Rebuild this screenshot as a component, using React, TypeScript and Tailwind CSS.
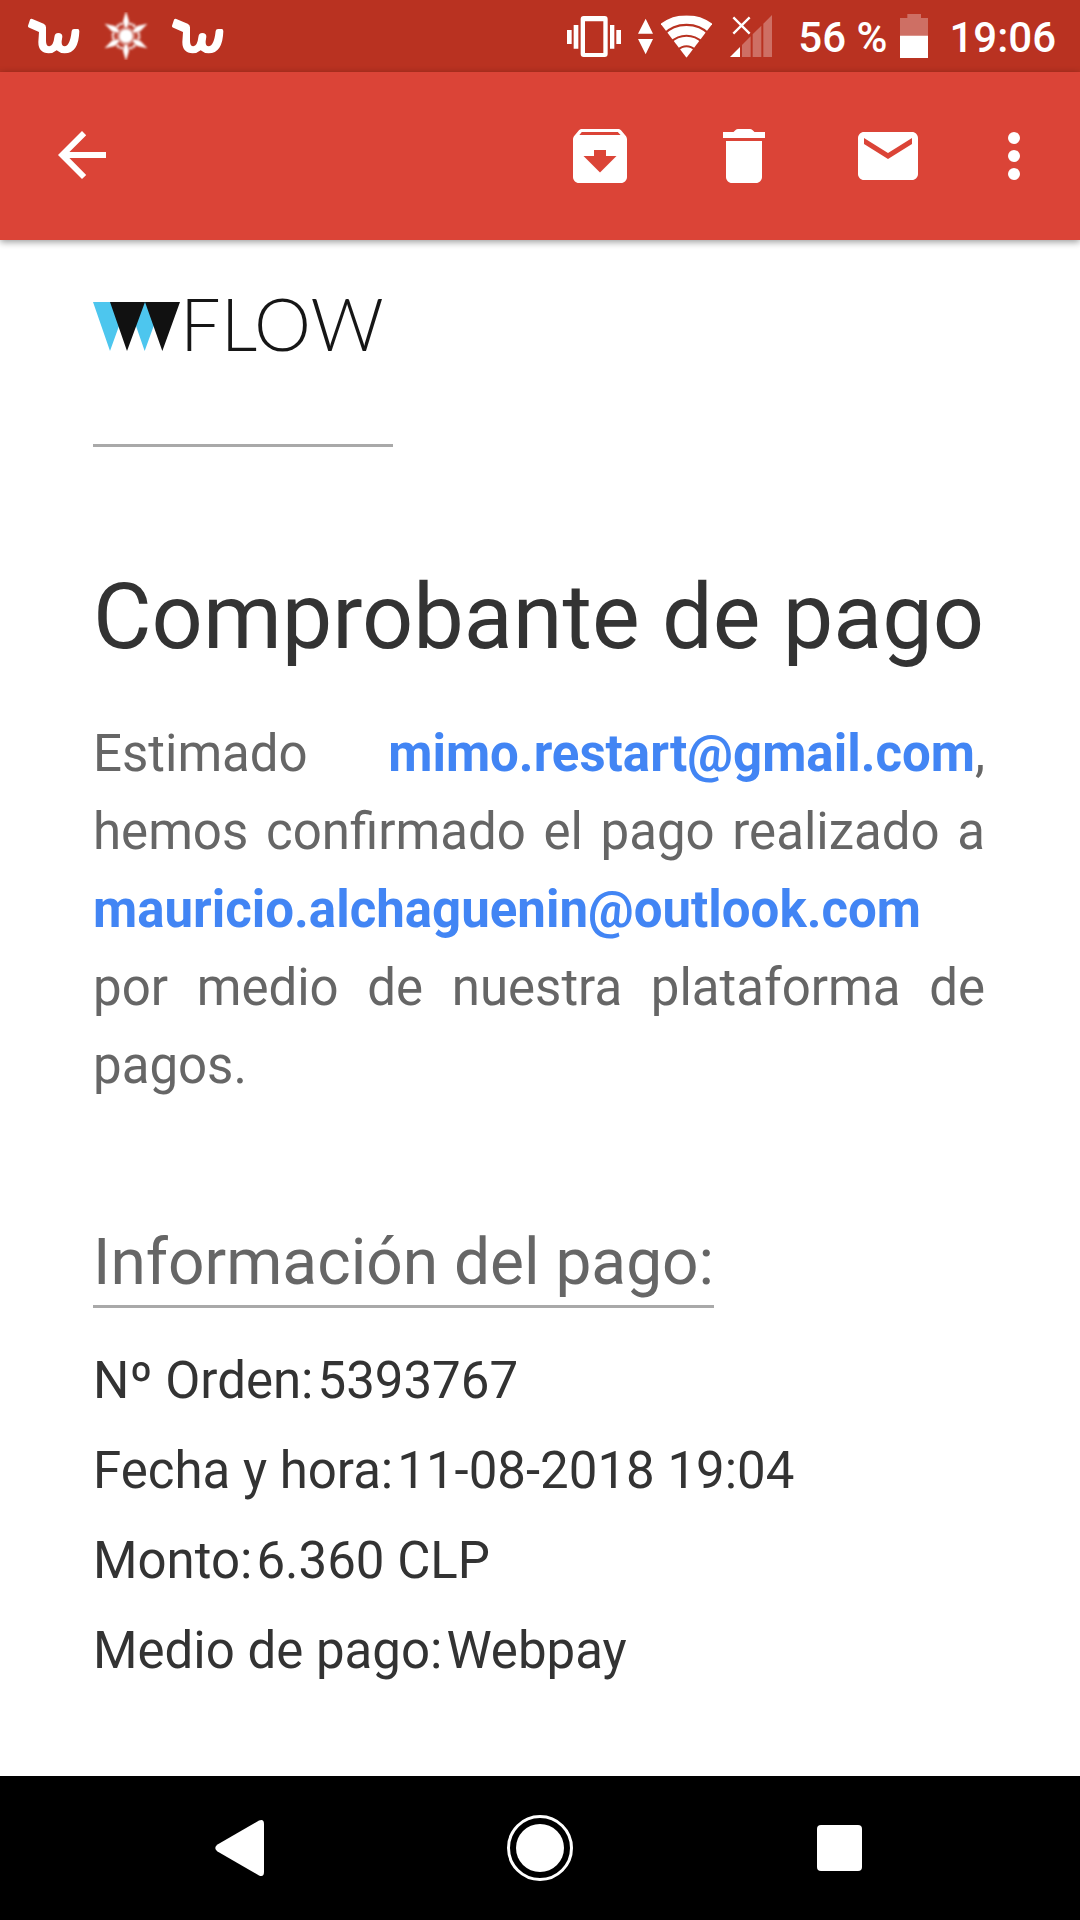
import type { ReactNode } from "react";

function WishIcon() {
  return (
    <svg viewBox="84 54 156 108" className="h-9 w-13" aria-hidden="true">
      <path
        d="M84 77 L90 59 Q92 55 97 57 L131 71 Q138 74 138 82 L138 122 Q138 139 148 139 Q160 138 163 112 Q164 99 175 99 Q187 99 187 110 L185 124 Q184 139 194 139 Q210 138 215 93 Q216 87 222 87 L233 87 Q238 87 238 94 Q236 160 194 160 Q180 160 170 151 Q160 160 146 160 Q115 159 115 126 L117 96 L88 83 Q83 81 84 77 Z"
        fill="white"
      />
    </svg>
  );
}

function SnowflakeIcon() {
  const rays = [0, 60, 120, 180, 240, 300];
  return (
    <svg viewBox="-72 -72 144 144" className="size-12" aria-hidden="true">
      <filter id="flake-glow" x="-10%" y="-10%" width="120%" height="120%">
        <feGaussianBlur stdDeviation="2.6" />
      </filter>
      <g fill="white" filter="url(#flake-glow)">
        {rays.map((angle) => (
          <g key={angle} transform={`rotate(${angle})`}>
            <path d="M0 -74 L9 -44 L4 -26 L-4 -26 L-9 -44 Z" />
            <path d="M-20 -36 L20 -36" stroke="white" strokeWidth="8" strokeDasharray="11 3" opacity="0.8" />
          </g>
        ))}
        <circle r="28" opacity="0.4" />
        <circle r="20" />
      </g>
    </svg>
  );
}

function VibrateIcon() {
  return (
    <svg viewBox="51 45 162 123" className="h-[41px] w-[54px]" aria-hidden="true">
      <path
        fill="white"
        fillRule="evenodd"
        d="M101 45H164Q173 45 173 54V159Q173 168 164 168H101Q92 168 92 159V54Q92 45 101 45ZM105 61V156H160V61Z"
      />
      <path fill="white" d="M71 72h14v71h-14zM51 87h14v42h-14zM180 72h13v71h-13zM199 87h14v42h-14z" />
    </svg>
  );
}

function DataArrowsIcon() {
  return (
    <svg viewBox="264 51 45 111" className="h-[37px] w-[15px]" aria-hidden="true">
      <path fill="white" d="M287 53L309 98H264ZM264 114H309L287 160Z" />
    </svg>
  );
}

function WifiIcon() {
  return (
    <svg viewBox="332 42 154 129" className="h-[43px] w-[51px]" aria-hidden="true">
      <clipPath id="wifi-fan">
        <path d="M409 171L311 42H507Z" />
      </clipPath>
      <g clipPath="url(#wifi-fan)" fill="none" stroke="white" strokeWidth="26">
        <circle cx="409" cy="171" r="116" />
        <circle cx="409" cy="171" r="83" />
        <circle cx="409" cy="171" r="51" />
        <circle cx="409" cy="171" r="32" fill="white" stroke="none" />
      </g>
    </svg>
  );
}

function SignalIcon() {
  return (
    <svg viewBox="540 45 126 126" className="size-[42px]" aria-hidden="true">
      <g fill="white">
        <path d="M540 171L570 141V171Z" />
        <path opacity="0.3" d="M576 171V135L602 109V171ZM608 171V103L634 77V171ZM640 171V71L666 45V171Z" />
      </g>
      <path d="M550 52L599 101M599 52L550 101" stroke="white" strokeWidth="7" />
    </svg>
  );
}

function BatteryIcon() {
  return (
    <svg viewBox="357 42 84 132" className="h-11 w-7" aria-hidden="true">
      <path fill="white" opacity="0.3" d="M379 42H420V54H441V107H357V54H379Z" />
      <path fill="white" d="M357 107H441V174H357Z" />
    </svg>
  );
}

function StatusBar() {
  return (
    <div className="flex h-18 items-center justify-between bg-[#b93221] pl-[18px] pr-6 text-[42px] leading-none font-medium text-white">
      <div className="flex items-center">
        <div className="flex w-18 justify-center"><WishIcon /></div>
        <div className="flex w-18 justify-center"><SnowflakeIcon /></div>
        <div className="flex w-18 justify-center"><WishIcon /></div>
      </div>
      <div className="flex items-center">
        <VibrateIcon />
        <div className="ml-[17px] flex items-center gap-2">
          <DataArrowsIcon />
          <WifiIcon />
        </div>
        <div className="ml-[18px]"><SignalIcon /></div>
        <span className="ml-[26px] pt-1">56 %</span>
        <div className="ml-[13px]"><BatteryIcon /></div>
        <time className="ml-[21px] pt-1">19:06</time>
      </div>
    </div>
  );
}

function BarButton({ label, wide, children }: { label: string; wide?: boolean; children: ReactNode }) {
  return (
    <button
      type="button"
      aria-label={label}
      className={wide ? "flex h-36 w-36 items-center justify-center" : "flex h-36 w-27 items-center justify-center"}
    >
      <svg viewBox="0 0 24 24" fill="white" className="size-18" aria-hidden="true">
        {children}
      </svg>
    </button>
  );
}

function AppBar() {
  return (
    <header className="relative flex h-42 items-center justify-between bg-[#db4437] pr-3 pl-7 shadow-[0_2px_7px_rgba(0,0,0,0.4)]">
      <BarButton label="Volver">
        <path d="M20 10.7H7.8l5.6-5.6L12 3.700l-8 8 8 8 1.4-1.4L7.8 12.700H20z" />
      </BarButton>
      <div className="flex">
        <BarButton label="Archivar" wide>
          <path
            fillRule="evenodd"
            d="M20.54 5.23l-1.39-1.68C18.88 3.21 18.47 3 18 3H6c-.47 0-.88.21-1.16.55L3.46 5.23C3.17 5.57 3 6.02 3 6.5V19c0 1.1.9 2 2 2h14c1.1 0 2-.9 2-2V6.5c0-.48-.17-.93-.46-1.27zM12 17.5L6.5 12H10v-2h4v2h3.5L12 17.5zM5.12 5l.81-1h12l.94 1H5.12z"
          />
        </BarButton>
        <BarButton label="Eliminar" wide>
          <path d="M6 19c0 1.1.9 2 2 2h8c1.1 0 2-.9 2-2V7H6zM19 4h-3.5l-.7-.7c-.2-.2-.5-.3-.8-.3h-4c-.3 0-.6.1-.8.3l-.7.7H5v2h14z" />
        </BarButton>
        <BarButton label="Marcar como no leído" wide>
          <path d="M20 4H4c-1.1 0-1.99.9-1.99 2L2 18c0 1.1.9 2 2 2h16c1.1 0 2-.9 2-2V6c0-1.1-.9-2-2-2zm0 4l-8 5-8-5V6l8 5 8-5v2z" />
        </BarButton>
        <BarButton label="Más opciones">
          <circle cx="12" cy="6" r="2" />
          <circle cx="12" cy="12" r="2" />
          <circle cx="12" cy="18" r="2" />
        </BarButton>
      </div>
    </header>
  );
}

function FlowLogo() {
  return (
    <div className="flex items-start text-[#161616]">
      <svg viewBox="39 66 261 147" className="mt-[3px] h-[49px] w-[87px]" aria-hidden="true">
        <path fill="#4dc6ee" d="M39 66H143L90 213ZM143 66H247L194 213Z" />
        <path fill="#111111" d="M90 66H195L141 213ZM195 66H300L247 213Z" />
      </svg>
      <span className="font-['Lato'] text-[72px] leading-[49px] font-light">FLOW</span>
    </div>
  );
}

const details = [
  ["Nº Orden:", "5393767"],
  ["Fecha y hora:", "11-08-2018 19:04"],
  ["Monto:", "6.360 CLP"],
  ["Medio de pago:", "Webpay"],
];

function NavButton({ label, children }: { label: string; children: ReactNode }) {
  return (
    <button type="button" aria-label={label} className="flex h-36 items-center justify-center">
      <svg viewBox="0 0 72 72" fill="white" className="size-18" aria-hidden="true">
        {children}
      </svg>
    </button>
  );
}

export default function App() {
  return (
    <div className="flex min-h-screen flex-col bg-white font-['Roboto',sans-serif]">
      <StatusBar />
      <AppBar />
      <main className="flex-1 pr-[95px] pl-[93px] pt-[59px] pb-20 text-[51px] text-[#333333]">
        <div className="h-[148px] w-75 border-b-3 border-[#a9a9a9]">
          <FlowLogo />
        </div>
        <h1 className="mt-[117px] text-[90px] leading-[108px] whitespace-nowrap">Comprobante de pago</h1>
        <p className="mt-[43px] text-justify leading-[78px] text-[#666666]">
          Estimado{" "}
          <a href="mailto:mimo.restart@gmail.com" className="font-bold text-[#4285f4]">mimo.restart@gmail.com</a>,
          hemos confirmado el pago realizado a{" "}
          <a href="mailto:mauricio.alchaguenin@outlook.com" className="font-bold text-[#4285f4]">mauricio.alchaguenin@outlook.com</a>{" "}
          por medio de nuestra plataforma de pagos.
        </p>
        <h2 className="mt-[120px] w-fit border-b-3 border-[#a9a9a9] pb-[5px] text-[64px] leading-[75px] text-[#666666]">
          Información del pago:
        </h2>
        <dl className="mt-[28px] leading-[90px]">
          {details.map(([label, value]) => (
            <div key={label} className="flex gap-1">
              <dt>{label}</dt>
              <dd>{value}</dd>
            </div>
          ))}
        </dl>
      </main>
      <nav className="grid grid-cols-3 bg-black px-[90px]">
        <NavButton label="Atrás">
          <path d="M13.500 32.500Q9 36 13.500 39.500L55 63.500Q60 65.500 60 60V12Q60 6.500 55 8.500Z" />
        </NavButton>
        <NavButton label="Inicio">
          <circle cx="36" cy="36" r="31.500" fill="none" stroke="white" strokeWidth="3" />
          <circle cx="36" cy="36" r="24" />
        </NavButton>
        <NavButton label="Recientes">
          <rect x="13" y="13" width="45" height="46" rx="4" />
        </NavButton>
      </nav>
    </div>
  );
}
